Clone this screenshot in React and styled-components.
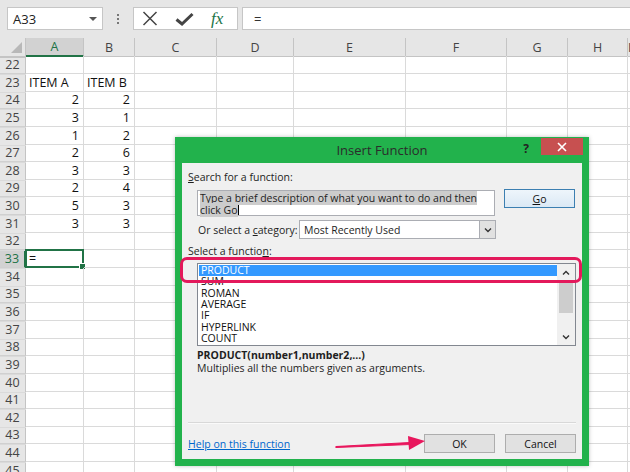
import React from 'react'
import styled, { createGlobalStyle } from 'styled-components'

const GlobalStyle = createGlobalStyle`
  html, body { margin: 0; padding: 0; background: #fff; overflow: hidden; }
  body { font-family: "Open Sans", "Noto Sans", sans-serif; }
  * { box-sizing: border-box; }
`

const COLS = '26px 58px 51px 82px 77px 112px 101px 61px 60px 1fr'
const LETTERS = ['A', 'B', 'C', 'D', 'E', 'F', 'G', 'H', 'I']
const GREEN = '#217346'

const Screen = styled.div`
  position: relative;
  width: 630px;
  height: 472px;
  overflow: hidden;
  background: #fff;
`

/* ---------- formula bar ---------- */
const FormulaBar = styled.div`
  height: 38px;
  background: #e6e6e6;
  display: flex;
  align-items: flex-start;
  padding-top: 7px;
`
const NameBox = styled.div`
  margin-left: 7px;
  width: 96px;
  height: 23px;
  background: #fff;
  border: 1px solid #c6c6c6;
  display: flex;
  align-items: center;
  justify-content: space-between;
  padding: 0 5px 0 5px;
  font-size: 13px;
  color: #222;
`
const Caret = styled.span`
  width: 0;
  height: 0;
  border-left: 4px solid transparent;
  border-right: 4px solid transparent;
  border-top: 4px solid #555;
`
const Grip = styled.div`
  width: 30px;
  height: 23px;
  display: flex;
  flex-direction: column;
  align-items: center;
  justify-content: center;
  gap: 2px;
  span { width: 2px; height: 2px; background: #777; }
`
const FxBox = styled.div`
  width: 105px;
  height: 23px;
  background: #fff;
  border: 1px solid #c6c6c6;
  display: flex;
  align-items: center;
  padding-left: 8px;
  gap: 17px;
`
const Fx = styled.span`
  font-family: "Liberation Serif", serif;
  font-style: italic;
  font-size: 17px;
  color: ${GREEN};
  margin-left: 0px;
  line-height: 1;
`
const FormulaInput = styled.div`
  margin-left: 4px;
  flex: 1;
  height: 23px;
  background: #fff;
  border: 1px solid #c6c6c6;
  border-right: none;
  display: flex;
  align-items: center;
  padding-left: 11px;
  font-size: 13px;
  color: #333;
`

/* ---------- sheet grid ---------- */
const Row = styled.div`
  display: grid;
  grid-template-columns: ${COLS};
  height: ${p => p.$h}px;
`
const HeadCell = styled.div`
  background: ${p => (p.$active ? '#d2d2d2' : '#e6e6e6')};
  color: ${p => (p.$active ? GREEN : '#444')};
  border-right: 1px solid #c4c4c4;
  border-bottom: ${p => (p.$active ? `2px solid ${GREEN}` : '1px solid #c4c4c4')};
  font-size: 12.5px;
  display: flex;
  align-items: center;
  justify-content: center;
  position: relative;
`
const Corner = styled(HeadCell)`
  &::after {
    content: '';
    position: absolute;
    right: 3px;
    bottom: 3px;
    border-left: 11px solid transparent;
    border-bottom: 11px solid #b8b8b8;
  }
`
const RowHead = styled.div`
  background: ${p => (p.$active ? '#d2d2d2' : '#e6e6e6')};
  color: ${p => (p.$active ? GREEN : '#444')};
  border-right: ${p => (p.$active ? `2px solid ${GREEN}` : '1px solid #c4c4c4')};
  border-bottom: 1px solid #d0d0d0;
  font-size: 12.5px;
  display: flex;
  align-items: center;
  justify-content: center;
`
const Cell = styled.div`
  border-right: 1px solid #dadada;
  border-bottom: 1px solid #dadada;
  font-size: 12.5px;
  color: #111;
  display: flex;
  align-items: center;
  justify-content: ${p => (p.$num ? 'flex-end' : 'flex-start')};
  padding: 0 4px 0 3px;
  white-space: nowrap;
  position: relative;
`
const Selected = styled.div`
  position: absolute;
  inset: -1px -1px -1px -1px;
  border: 2px solid ${GREEN};
  &::after {
    content: '';
    position: absolute;
    right: -4px;
    bottom: -4px;
    width: 5px;
    height: 5px;
    background: ${GREEN};
    border: 1px solid #fff;
  }
`

/* ---------- dialog ---------- */
const Dialog = styled.div`
  position: absolute;
  left: 175px;
  top: 137px;
  width: 414px;
  height: 329px;
  background: #22b24c;
  padding: 0 7px 7px 7px;
  display: flex;
  flex-direction: column;
  box-shadow: 0 0 4px rgba(0, 0, 0, 0.25);
  z-index: 2;
`
const TitleBar = styled.div`
  height: 26px;
  display: grid;
  grid-template-columns: 1fr auto 1fr;
  align-items: start;
`
const Title = styled.div`
  font-size: 13px;
  color: #2b2b2b;
  line-height: 26px;
`
const TitleControls = styled.div`
  justify-self: end;
  display: flex;
  align-items: flex-start;
  margin-right: -1px;
`
const Help = styled.span`
  font-size: 12px;
  font-weight: 700;
  color: #222;
  margin: 3px 12px 0 0;
`
const Close = styled.div`
  width: 42px;
  height: 17px;
  margin-top: 1px;
  background: #c75050;
  display: flex;
  align-items: center;
  justify-content: center;
`
const Body = styled.div`
  flex: 1;
  background: #f0f0f0;
  padding: 6px 6px 6px 6px;
  display: flex;
  flex-direction: column;
  font-size: 10.5px;
  color: #1e1e1e;
`
const Label = styled.div`
  line-height: 14px;
  margin-top: ${p => p.$mt || 0}px;
  margin-left: ${p => p.$ml || 0}px;
  u { text-decoration: underline; }
`
const SearchRow = styled.div`
  display: flex;
  align-items: flex-start;
  margin-top: 6px;
  margin-left: 9px;
`
const SearchInput = styled.div`
  width: 298px;
  height: 26px;
  background: #fff;
  border: 1px solid #abadb3;
  padding: 2px 0 0 2px;
  line-height: 11.5px;
  span { background: #cccccc; }
`
const Cursor = styled.i`
  display: inline-block;
  width: 1px;
  height: 10px;
  background: #000;
  vertical-align: -1px;
`
const Button = styled.div`
  width: ${p => p.$w || 71}px;
  height: 19px;
  margin-left: ${p => p.$ml || 0}px;
  margin-top: ${p => p.$mt || 0}px;
  border: 1px solid ${p => (p.$default ? '#3c7fb1' : '#adadad')};
  background: ${p => (p.$default ? 'linear-gradient(#eef5fb, #dbe9f5)' : '#e1e1e1')};
  display: flex;
  align-items: center;
  justify-content: center;
  font-size: 10.5px;
  color: #111;
  u { text-decoration: underline; }
`
const CategoryRow = styled.div`
  display: flex;
  align-items: center;
  width: 298px;
  margin: 4px 0 0 10px;
  height: 19px;
`
const Select = styled.div`
  margin-left: auto;
  width: 197px;
  height: 19px;
  background: #fff;
  border: 1px solid #abadb3;
  display: flex;
  align-items: center;
  padding-left: 4px;
`
const SelectArrow = styled.div`
  margin-left: auto;
  width: 16px;
  height: 17px;
  background: #e1e1e1;
  border-left: 1px solid #abadb3;
  display: flex;
  align-items: center;
  justify-content: center;
`
const ListBox = styled.div`
  margin: 5px 0 0 9px;
  width: 379px;
  height: 83px;
  background: #fff;
  border: 1px solid #828790;
  display: flex;
  padding: 1px 0 0 1px;
`
const Items = styled.div`
  flex: 1;
`
const Item = styled.div`
  height: 11.33px;
  line-height: 11.33px;
  padding-left: 2px;
  background: ${p => (p.$selected ? '#3399ff' : 'transparent')};
  color: ${p => (p.$selected ? '#fff' : '#111')};
`
const ScrollBar = styled.div`
  width: 18px;
  display: flex;
  flex-direction: column;
  align-items: center;
  background: #f0f0f0;
  margin-top: -1px;
`
const ScrollBtn = styled.div`
  height: 17px;
  width: 100%;
  display: flex;
  align-items: center;
  justify-content: center;
`
const Thumb = styled.div`
  width: 14px;
  height: 32px;
  background: #cdcdcd;
`
const Signature = styled.div`
  margin: 3px 0 0 9px;
  font-weight: 700;
  line-height: 13px;
`
const Description = styled.div`
  margin-left: 9px;
  line-height: 13px;
`
const Separator = styled.div`
  margin-top: auto;
  width: 388px;
  height: 2px;
  border-top: 1px solid #d8d8d8;
  border-bottom: 1px solid #fafafa;
`
const Footer = styled.div`
  display: flex;
  align-items: center;
  margin-top: 10px;
  height: 19px;
`
const HelpLink = styled.span`
  color: #0066cc;
  text-decoration: underline;
  margin-right: auto;
`

/* ---------- annotations ---------- */
const Highlight = styled.div`
  position: absolute;
  left: 180px;
  top: 257px;
  width: 402px;
  height: 26px;
  border: 3px solid #e3195b;
  border-radius: 7px;
  z-index: 3;
`
const ArrowSvg = styled.svg`
  position: absolute;
  left: 330px;
  top: 430px;
  z-index: 3;
`

const ROW_NUMS = Array.from({ length: 25 }, (_, i) => 22 + i)
const A = { 24: 2, 25: 3, 26: 1, 27: 2, 28: 3, 29: 2, 30: 5, 31: 3 }
const B = { 24: 2, 25: 1, 26: 2, 27: 6, 28: 3, 29: 4, 30: 3, 31: 3 }
const FUNCS = ['PRODUCT', 'SUM', 'ROMAN', 'AVERAGE', 'IF', 'HYPERLINK', 'COUNT']

function rowHeight(i) {
  return Math.round(56 + (i + 1) * 17.64) - Math.round(56 + i * 17.64)
}

function cellContent(r, c) {
  if (r === 23 && c === 0) return 'ITEM A'
  if (r === 23 && c === 1) return 'ITEM B'
  if (c === 0 && A[r] !== undefined) return A[r]
  if (c === 1 && B[r] !== undefined) return B[r]
  if (r === 33 && c === 0) return '='
  return ''
}

function Sheet() {
  return (
    <>
      <Row $h={18}>
        <Corner />
        {LETTERS.map((l, i) => (
          <HeadCell key={l} $active={i === 0}>{l}</HeadCell>
        ))}
        <HeadCell />
      </Row>
      {ROW_NUMS.map((r, i) => (
        <Row key={r} $h={rowHeight(i)}>
          <RowHead $active={r === 33}>{r}</RowHead>
          {LETTERS.map((l, c) => {
            const v = cellContent(r, c)
            return (
              <Cell key={l} $num={typeof v === 'number'}>
                {v}
                {r === 33 && c === 0 && <Selected />}
              </Cell>
            )
          })}
          <Cell />
        </Row>
      ))}
    </>
  )
}

function InsertFunction() {
  return (
    <Dialog>
      <TitleBar>
        <span />
        <Title>Insert Function</Title>
        <TitleControls>
          <Help>?</Help>
          <Close>
            <svg width="10" height="10" viewBox="0 0 10 10">
              <path d="M1 1L9 9M9 1L1 9" stroke="#fff" strokeWidth="1.6" />
            </svg>
          </Close>
        </TitleControls>
      </TitleBar>
      <Body>
        <Label $mt={1}><u>S</u>earch for a function:</Label>
        <SearchRow>
          <SearchInput>
            <span>Type a brief description of what you want to do and then</span>
            <br />
            <span>click Go</span><Cursor />
          </SearchInput>
          <Button $default $ml={9} $mt={-1}><u>G</u>o</Button>
        </SearchRow>
        <CategoryRow>
          <span>Or select a <u>c</u>ategory:</span>
          <Select>
            Most Recently Used
            <SelectArrow>
              <svg width="8" height="6" viewBox="0 0 8 6">
                <path d="M1 1.5L4 4.5L7 1.5" fill="none" stroke="#333" strokeWidth="1.4" />
              </svg>
            </SelectArrow>
          </Select>
        </CategoryRow>
        <Label $mt={5}>Select a functio<u>n</u>:</Label>
        <ListBox>
          <Items>
            {FUNCS.map((f, i) => (
              <Item key={f} $selected={i === 0}>{f}</Item>
            ))}
          </Items>
          <ScrollBar>
            <ScrollBtn>
              <svg width="8" height="6" viewBox="0 0 8 6">
                <path d="M1 4.5L4 1.5L7 4.5" fill="none" stroke="#333" strokeWidth="1.4" />
              </svg>
            </ScrollBtn>
            <Thumb />
            <ScrollBtn style={{ marginTop: 'auto' }}>
              <svg width="8" height="6" viewBox="0 0 8 6">
                <path d="M1 1.5L4 4.5L7 1.5" fill="none" stroke="#333" strokeWidth="1.4" />
              </svg>
            </ScrollBtn>
          </ScrollBar>
        </ListBox>
        <Signature>PRODUCT(number1,number2,...)</Signature>
        <Description>Multiplies all the numbers given as arguments.</Description>
        <Separator />
        <Footer>
          <HelpLink>Help on this function</HelpLink>
          <Button>OK</Button>
          <Button $ml={10}>Cancel</Button>
        </Footer>
      </Body>
    </Dialog>
  )
}

export default function App() {
  return (
    <>
      <GlobalStyle />
      <Screen>
        <FormulaBar>
          <NameBox>A33<Caret /></NameBox>
          <Grip><span /><span /><span /></Grip>
          <FxBox>
            <svg width="16" height="15" viewBox="0 0 16 15">
              <path d="M1.5 1L14.5 14M14.5 1L1.5 14" stroke="#444" strokeWidth="1.5" />
            </svg>
            <svg width="19" height="14" viewBox="0 0 19 14">
              <path d="M1.5 7.5L7 12L17.5 2" fill="none" stroke="#444" strokeWidth="3" />
            </svg>
            <Fx>fx</Fx>
          </FxBox>
          <FormulaInput>=</FormulaInput>
        </FormulaBar>
        <Sheet />
        <InsertFunction />
        <Highlight />
        <ArrowSvg width="100" height="30" viewBox="0 0 100 30">
          <path d="M6 16.5L80 12.5L80 14.5L6 17.5Z" fill="#e8175d" stroke="#e8175d" strokeWidth="1.2" strokeLinejoin="round" />
          <path d="M78 6L95 11L79 20Z" fill="#e8175d" />
        </ArrowSvg>
      </Screen>
    </>
  )
}
